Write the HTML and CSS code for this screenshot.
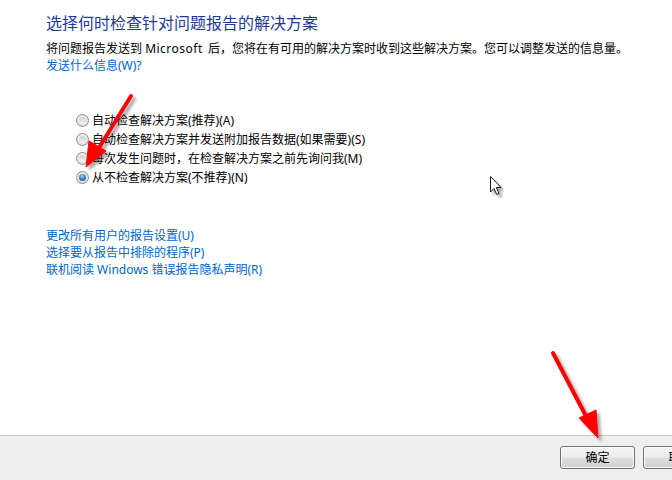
FILE: index.html
```html
<!DOCTYPE html>
<html lang="zh-CN">
<head>
<meta charset="utf-8">
<title>问题报告设置</title>
<link rel="stylesheet" href="styles.css">
</head>
<body>
<div class="page">
  <main class="main">
    <h1 class="title">选择何时检查针对问题报告的解决方案</h1>
    <p class="desc">将问题报告发送到 <span class="latin">Microsoft</span> 后，您将在有可用的解决方案时收到这些解决方案。您可以调整发送的信息量。</p>
    <a class="link" href="#">发送什么信息(W)?</a>

    <div class="options">
      <label class="option"><span class="radio"></span>自动检查解决方案(推荐)(A)</label>
      <label class="option"><span class="radio"></span>自动检查解决方案并发送附加报告数据(如果需要)(S)</label>
      <label class="option"><span class="radio"></span>每次发生问题时，在检查解决方案之前先询问我(M)</label>
      <label class="option"><span class="radio checked"></span>从不检查解决方案(不推荐)(N)</label>
    </div>

    <div class="links">
      <a class="link" href="#">更改所有用户的报告设置(U)</a>
      <a class="link" href="#">选择要从报告中排除的程序(P)</a>
      <a class="link" href="#">联机阅读 Windows 错误报告隐私声明(R)</a>
    </div>
  </main>

  <footer class="footer">
    <div class="buttons">
      <button class="btn">确定</button>
      <button class="btn">取消</button>
    </div>
  </footer>

  <svg class="overlay" width="672" height="480" viewBox="0 0 672 480">
    <defs>
      <filter id="shadow" x="-20%" y="-20%" width="140%" height="140%">
        <feGaussianBlur in="SourceAlpha" stdDeviation="1.6"/>
        <feOffset dx="3" dy="3" result="b"/>
        <feComponentTransfer><feFuncA type="linear" slope="0.35"/></feComponentTransfer>
        <feMerge><feMergeNode/><feMergeNode in="SourceGraphic"/></feMerge>
      </filter>
    </defs>
    <g filter="url(#shadow)" fill="#ff0000" stroke="#ff0000">
      <line x1="131" y1="96" x2="97" y2="151" stroke-width="4" stroke-linecap="round"/>
      <polygon points="86,167 89,141 106,151" stroke-width="1" stroke-linejoin="round"/>
      <line x1="553" y1="353" x2="588" y2="420" stroke-width="4" stroke-linecap="round"/>
      <polygon points="598,438 579,418 596,410" stroke-width="1" stroke-linejoin="round"/>
    </g>
    <g class="cursor" transform="translate(490,176)">
      <path d="M0.5,0.5 L0.5,16 L4,12.5 L6.8,18.5 L9,17.5 L6.3,11.5 L11,11.5 Z" fill="#ffffff" stroke="#1a1a2e" stroke-width="1" stroke-linejoin="round" filter="url(#shadow)"/>
    </g>
  </svg>
</div>
</body>
</html>
```
FILE: styles.css
```css
html, body {
  margin: 0;
  padding: 0;
  background: #ffffff;
  overflow: hidden;
}

.page {
  position: relative;
  width: 672px;
  height: 480px;
  display: flex;
  flex-direction: column;
  font-family: "Noto Sans", "Noto Sans CJK SC", sans-serif;
  font-size: 12px;
  color: #000000;
}

.main {
  flex: 1;
  padding: 12px 0 0 46px;
  display: flex;
  flex-direction: column;
  align-items: flex-start;
}

.title {
  margin: 0;
  font-size: 16px;
  font-weight: normal;
  line-height: 22px;
  color: #1e3b91;
}

.desc {
  margin: 6px 0 0;
  line-height: 17px;
  white-space: nowrap;
}

.latin {
  letter-spacing: 0.5px;
  margin-right: 2px;
}

.link {
  color: #0066cc;
  text-decoration: none;
  line-height: 17px;
}

.options {
  margin: 37px 0 0 30px;
  display: flex;
  flex-direction: column;
}

.option {
  display: flex;
  align-items: center;
  height: 19px;
  line-height: 19px;
  white-space: nowrap;
}

.radio {
  box-sizing: border-box;
  width: 13px;
  height: 13px;
  border-radius: 50%;
  border: 1px solid #8f8f8f;
  background: radial-gradient(circle at 50% 40%, #fbfbfb 0%, #e6e6e6 55%, #cdcdcd 100%);
  margin-right: 3px;
  position: relative;
  flex-shrink: 0;
}

.radio::after {
  content: "";
  position: absolute;
  inset: 2px;
  border-radius: 50%;
  background: linear-gradient(#cfcfcf, #f4f4f4);
}

.radio.checked::after {
  background: radial-gradient(circle at 45% 35%, #a9dbf9 0%, #3d8ccc 40%, #0b4d8a 100%);
}

.links {
  margin-top: 40px;
  display: flex;
  flex-direction: column;
  align-items: flex-start;
}

.footer {
  border-top: 1px solid #c9c9c9;
  background: #efefef;
  display: flex;
  justify-content: flex-end;
  align-items: flex-start;
  padding-top: 10px;
  box-sizing: border-box;
  height: 45px;
  overflow: hidden;
}

.buttons {
  display: flex;
  gap: 8px;
  margin-right: -46px;
}

.btn {
  width: 75px;
  height: 23px;
  flex-shrink: 0;
  border: 1px solid #707070;
  border-radius: 3px;
  background: linear-gradient(#f3f3f3 0%, #ececec 48%, #dedede 52%, #d0d0d0 100%);
  box-shadow: inset 0 0 0 1px #fcfcfc;
  font-family: "Noto Sans", "Noto Sans CJK SC", sans-serif;
  font-size: 12px;
  color: #000000;
  padding: 0;
  line-height: 21px;
}

.overlay {
  position: absolute;
  left: 0;
  top: 0;
  pointer-events: none;
}
```
